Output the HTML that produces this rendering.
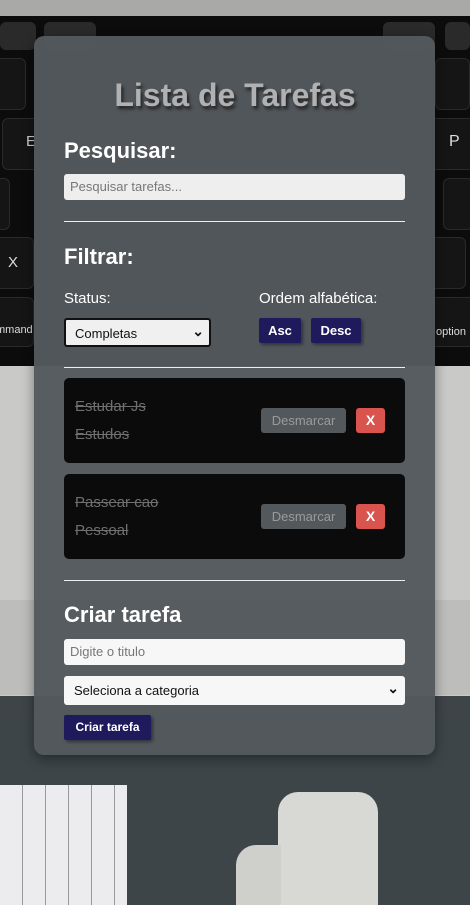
<!DOCTYPE html>
<html><head><meta charset="utf-8"><style>
*{box-sizing:border-box;margin:0;padding:0}
body{width:470px;height:905px;overflow:hidden;position:relative;font-family:"Liberation Sans",sans-serif;background:#3e4448}
.bg{position:absolute}
.key{position:absolute;background:#151515;border-radius:6px;border:1px solid #2a2a2a}
.card{position:absolute;left:34px;top:36px;width:401px;height:719px;background:rgba(83,89,93,0.97);border-radius:10px;box-shadow:0 4px 12px rgba(0,0,0,.4)}
.a{position:absolute}
h1{position:absolute;left:0;width:470px;text-align:center;top:77px;font-size:32px;color:#b0b1b3;text-shadow:2px 3px 3px #222}
h2{position:absolute;left:64px;font-size:22px;color:#fff;font-weight:bold}
.inp{position:absolute;left:64px;width:341px;background:#f7f7f7;border-radius:3px;font-size:13px;color:#777;padding-left:6px}
.hr{position:absolute;left:64px;width:341px;height:1px;background:#eee}
.btn{position:absolute;background:#1f1a5c;color:#fff;font-size:13px;font-weight:bold;text-align:center;border-radius:2px;box-shadow:2px 2px 3px rgba(0,0,0,.4)}
.task{position:absolute;left:64px;width:341px;height:85px;background:#0b0b0b;border-radius:5px}
.t{position:absolute;left:11px;color:#6f6f6f;font-size:15px;text-decoration:line-through}
.des{position:absolute;left:197px;top:30px;width:85px;height:25px;background:#52585c;color:#9a9a9a;font-size:13px;text-align:center;line-height:25px;border-radius:3px}
.x{position:absolute;left:292px;top:30px;width:29px;height:25px;background:#d9534f;color:#fff;font-weight:bold;font-size:14px;text-align:center;line-height:25px;border-radius:3px}
</style></head><body>
<div class="bg" style="left:0;top:0;width:470px;height:16px;background:#a9a9a7"></div>
<div class="bg" style="left:0;top:16px;width:470px;height:350px;background:#0c0c0c"></div>
<div class="bg" style="left:0;top:715px;width:470px;height:190px;background:#3d4549"></div>
<div class="bg" style="left:0;top:785px;width:127px;height:120px;background:#ececef;background-image:repeating-linear-gradient(90deg,#ececef 0 22px,#999 22px 23px)"></div>
<div class="bg" style="left:278px;top:792px;width:100px;height:113px;background:#d8d8d4;border-radius:20px 20px 0 0"></div>
<div class="bg" style="left:236px;top:845px;width:45px;height:60px;background:#cfcfcc;border-radius:20px 0 0 0"></div>
<div class="bg" style="left:0;top:366px;width:470px;height:330px;background:#c9c9c7"></div>
<div class="bg" style="left:0;top:600px;width:470px;height:95px;background:#bdbdbb"></div>
<div class="key" style="left:0;top:22px;width:36px;height:28px;background:#2a2a2a"></div>
<div class="key" style="left:44px;top:22px;width:52px;height:28px;background:#2a2a2a"></div>
<div class="key" style="left:383px;top:22px;width:52px;height:28px;background:#2a2a2a"></div>
<div class="key" style="left:445px;top:22px;width:25px;height:28px;background:#2a2a2a"></div>
<div class="key" style="left:-28px;top:58px;width:54px;height:52px"></div>
<div class="key" style="left:435px;top:58px;width:35px;height:52px"></div>
<div class="key" style="left:2px;top:118px;width:54px;height:52px"></div>
<div class="key" style="left:428px;top:118px;width:54px;height:52px"></div>
<div class="key" style="left:-10px;top:178px;width:20px;height:52px"></div>
<div class="key" style="left:443px;top:178px;width:30px;height:52px"></div>
<div class="key" style="left:-20px;top:237px;width:54px;height:52px"></div>
<div class="key" style="left:412px;top:237px;width:54px;height:52px"></div>
<div class="key" style="left:-20px;top:297px;width:54px;height:50px"></div>
<div class="key" style="left:427px;top:297px;width:54px;height:50px"></div>
<div class="a" style="top:133px;left:26px;color:#ccc;font-size:15px">E</div>
<div class="a" style="left:449px;top:133px;color:#ddd;font-size:16px">P</div>
<div class="a" style="left:8px;top:254px;color:#ddd;font-size:15px">X</div>
<div class="a" style="left:-4px;top:324px;color:#ddd;font-size:11px">mmand</div>
<div class="a" style="left:436px;top:326px;color:#ddd;font-size:11px">option</div>
<div class="card"></div>
<h1>Lista de Tarefas</h1>
<h2 style="top:138px">Pesquisar:</h2>
<div class="inp" style="top:174px;height:26px;line-height:26px;background:#eee">Pesquisar tarefas...</div>
<div class="hr" style="top:221px"></div>
<h2 style="top:244px">Filtrar:</h2>
<div class="a" style="left:64px;top:290px;color:#fff;font-size:15px">Status:</div>
<div class="a" style="left:259px;top:290px;color:#fff;font-size:15px">Ordem alfabética:</div>
<div class="a" style="left:64px;top:318px;width:147px;height:29px;background:#f0f0f0;border:2px solid #111;border-radius:3px;font-size:13px;padding:6px 9px;color:#111">Completas<span style="position:absolute;right:5px;top:3px;font-size:14px;font-weight:bold">⌄</span></div>
<div class="btn" style="left:259px;top:318px;width:42px;height:25px;line-height:25px">Asc</div>
<div class="btn" style="left:311px;top:318px;width:50px;height:25px;line-height:25px">Desc</div>
<div class="hr" style="top:367px"></div>
<div class="task" style="top:378px"><div class="t" style="top:20px">Estudar Js</div><div class="t" style="top:48px">Estudos</div><div class="des">Desmarcar</div><div class="x">X</div></div>
<div class="task" style="top:474px"><div class="t" style="top:20px">Passear cao</div><div class="t" style="top:48px">Pessoal</div><div class="des">Desmarcar</div><div class="x">X</div></div>
<div class="hr" style="top:580px"></div>
<h2 style="top:602px">Criar tarefa</h2>
<div class="inp" style="top:639px;height:26px;line-height:26px">Digite o titulo</div>
<div class="inp" style="top:676px;height:29px;line-height:29px;color:#111;padding-left:10px">Seleciona a categoria<span style="position:absolute;right:6px;top:-2px;font-size:14px;font-weight:bold">⌄</span></div>
<div class="btn" style="left:64px;top:715px;width:87px;height:25px;line-height:25px;font-size:12px">Criar tarefa</div>
</body></html>
